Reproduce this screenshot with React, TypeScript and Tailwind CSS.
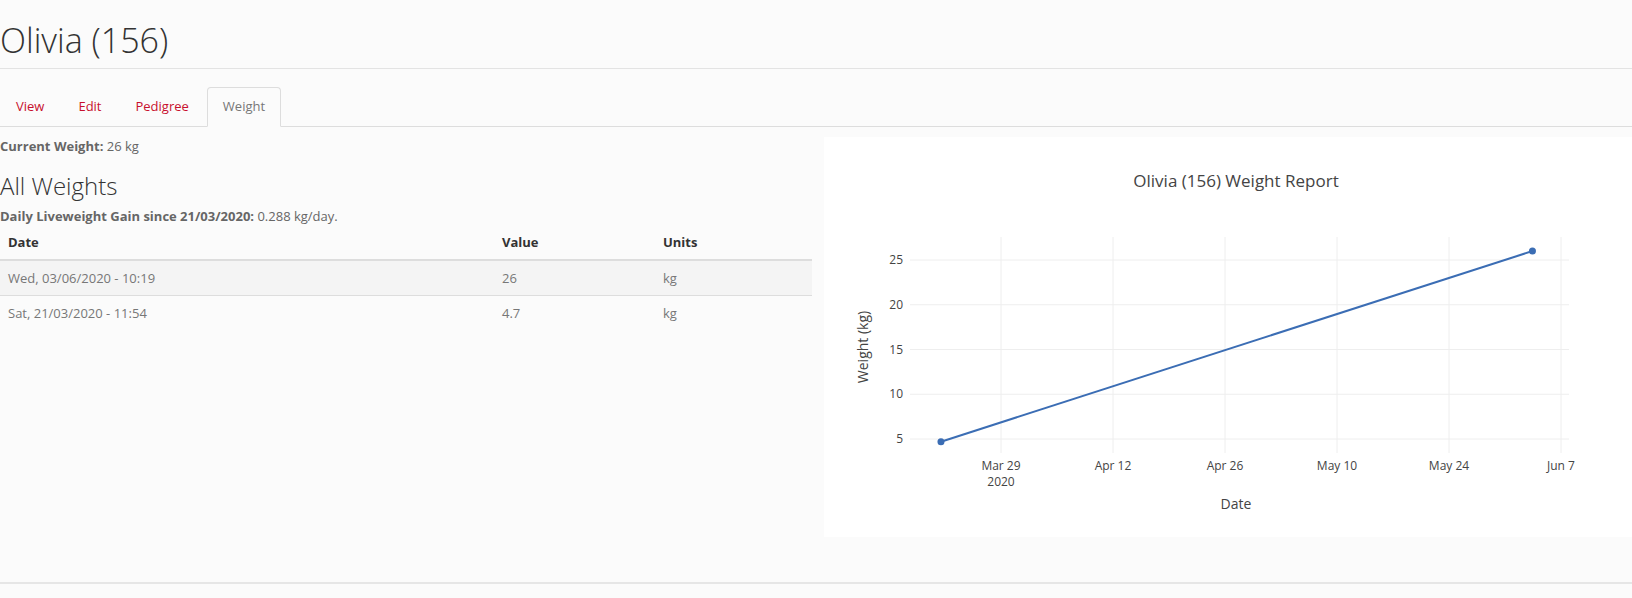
import React from "react";

const tabs = [
  { label: "View", active: false },
  { label: "Edit", active: false },
  { label: "Pedigree", active: false },
  { label: "Weight", active: true },
];

const weights = [
  { date: "Wed, 03/06/2020 - 10:19", value: "26", units: "kg" },
  { date: "Sat, 21/03/2020 - 11:54", value: "4.7", units: "kg" },
];

// plot geometry inside the 808x400 chart box
const X0 = 177; // Mar 29
const DAY = 8;
const Y5 = 302;
const PER_KG = 8.95;
const xAt = (days: number) => X0 + days * DAY;
const yAt = (kg: number) => Y5 - (kg - 5) * PER_KG;

const xTicks = [
  { d: 0, label: "Mar 29", sub: "2020" },
  { d: 14, label: "Apr 12" },
  { d: 28, label: "Apr 26" },
  { d: 42, label: "May 10" },
  { d: 56, label: "May 24" },
  { d: 70, label: "Jun 7" },
];
const yTicks = [5, 10, 15, 20, 25];
const points = [
  { d: -7.504, kg: 4.7 },
  { d: 66.43, kg: 26 },
];

const WeightChart = () => (
  <svg width="808" height="400" viewBox="0 0 808 400" fontFamily="'Open Sans', sans-serif">
    <text x="412" y="50" textAnchor="middle" fontSize="17" fill="#444">
      Olivia (156) Weight Report
    </text>
    {xTicks.map((t) => (
      <line key={t.label} x1={xAt(t.d)} x2={xAt(t.d)} y1="100" y2="316" stroke="#eee" strokeWidth="1" />
    ))}
    {yTicks.map((v) => (
      <line key={v} x1="86" x2="745" y1={yAt(v)} y2={yAt(v)} stroke="#eee" strokeWidth="1" />
    ))}
    {yTicks.map((v) => (
      <text key={v} x="79" y={yAt(v) + 4} textAnchor="end" fontSize="12" fill="#444">
        {v}
      </text>
    ))}
    {xTicks.map((t) => (
      <g key={t.label}>
        <text x={xAt(t.d)} y="333" textAnchor="middle" fontSize="12" fill="#444">
          {t.label}
        </text>
        {t.sub && (
          <text x={xAt(t.d)} y="349" textAnchor="middle" fontSize="12" fill="#444">
            {t.sub}
          </text>
        )}
      </g>
    ))}
    <polyline
      points={points.map((p) => `${xAt(p.d)},${yAt(p.kg)}`).join(" ")}
      fill="none"
      stroke="#3b6db4"
      strokeWidth="2"
    />
    {points.map((p, i) => (
      <circle key={i} cx={xAt(p.d)} cy={yAt(p.kg)} r="3.5" fill="#3b6db4" />
    ))}
    <text x="412" y="372" textAnchor="middle" fontSize="14" fill="#444">
      Date
    </text>
    <text x="0" y="0" transform="translate(44 210) rotate(-90)" textAnchor="middle" fontSize="14" fill="#444">
      Weight (kg)
    </text>
  </svg>
);

const App = () => {
  return (
    <div className="w-[1632px] h-[598px] bg-[#fbfbfb] font-['Open_Sans',sans-serif] text-[13px] text-[#666] overflow-hidden">
      <div className="pt-5 pb-2 border-b border-[#e3e3e3]">
        <h1 className="text-[34px] leading-[40px] font-light text-[#333]">Olivia (156)</h1>
      </div>

      <ul className="mt-[18px] flex gap-[2px] border-b border-[#ddd] h-[40px]">
        {tabs.map((t) => (
          <li key={t.label} className="-mb-px">
            <a
              className={
                t.active
                  ? "flex h-[40px] items-center px-[15px] border border-[#ddd] border-b-transparent rounded-t-[4px] bg-[#fbfbfb] text-[#777]"
                  : "flex h-[40px] items-center px-[15px] border border-transparent text-[#c8102e]"
              }
            >
              {t.label}
            </a>
          </li>
        ))}
      </ul>

      <div className="mt-[10px] flex">
        <div className="w-[812px]">
          <p className="leading-[18px]">
            <span className="font-bold">Current Weight:</span> 26 kg
          </p>
          <h3 className="mt-[18px] text-[24px] leading-[26px] font-light text-[#333]">All Weights</h3>
          <p className="mt-[8px] leading-[18px]">
            <span className="font-bold">Daily Liveweight Gain since 21/03/2020:</span> 0.288 kg/day.
          </p>
          <table className="w-full border-collapse">
            <thead>
              <tr className="border-b-2 border-[#ddd] text-left text-[#333]">
                <th className="w-[494px] px-2 py-2 leading-[18px] font-bold">Date</th>
                <th className="w-[161px] px-2 py-2 leading-[18px] font-bold">Value</th>
                <th className="px-2 py-2 leading-[18px] font-bold">Units</th>
              </tr>
            </thead>
            <tbody className="text-[#777]">
              {weights.map((w, i) => (
                <tr key={w.date} className={i === 0 ? "bg-[#f4f4f4] border-b border-[#ddd]" : ""}>
                  <td className="px-2 py-2 leading-[18px]">{w.date}</td>
                  <td className="px-2 py-2 leading-[18px]">{w.value}</td>
                  <td className="px-2 py-2 leading-[18px]">{w.units}</td>
                </tr>
              ))}
            </tbody>
          </table>
        </div>
        <div className="ml-3 flex-1 bg-white">
          <WeightChart />
        </div>
      </div>

      <div className="mt-[45px] border-t-2 border-[#e6e6e6]" />
    </div>
  );
};

export default App;
